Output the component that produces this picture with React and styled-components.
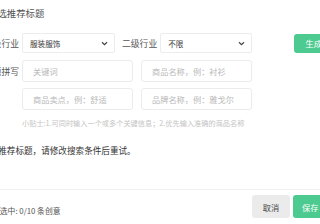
import styled, { createGlobalStyle } from "styled-components";

const GlobalStyle = createGlobalStyle`
  html, body {
    margin: 0;
    padding: 0;
    background: #fff;
    overflow: hidden;
  }
  body {
    font-family: "Noto Sans CJK SC", "Noto Sans", sans-serif;
    color: #333;
  }
`

const Chevron = () => (
    <svg width="7" height="5" viewBox="0 0 7 5">
        <path d="M1 1.2 L3.5 3.6 L6 1.2" fill="none" stroke="#444" strokeWidth="1.2"/>
    </svg>
)

function App() {
    return (
        <>
            <GlobalStyle/>
            <Dialog>
                <Title>精选推荐标题</Title>
                <Form>
                    <SelectRow>
                        <Label>一级行业</Label>
                        <Select width={93}>
                            <span>服装服饰</span>
                            <Chevron/>
                        </Select>
                        <Label $inline>二级行业</Label>
                        <Select width={92}>
                            <span>不限</span>
                            <Chevron/>
                        </Select>
                        <GreenButton>生成标题</GreenButton>
                    </SelectRow>
                    <InputRow>
                        <Label>标题拼写</Label>
                        <Inputs>
                            <Input placeholder="关键词"/>
                            <Input placeholder="商品名称，例：衬衫"/>
                        </Inputs>
                    </InputRow>
                    <InputRow $tight>
                        <Label/>
                        <Inputs>
                            <Input placeholder="商品卖点，例：舒适"/>
                            <Input placeholder="品牌名称，例：雅戈尔"/>
                        </Inputs>
                    </InputRow>
                    <Hint>小贴士:1.可同时输入一个或多个关键信息；2.优先输入准确的商品名称</Hint>
                </Form>
                <Empty>暂无推荐标题，请修改搜索条件后重试。</Empty>
            </Dialog>
            <Divider/>
            <Footer>
                <Selected>已选中: 0/10 条创意</Selected>
                <Buttons>
                    <CancelButton>取消</CancelButton>
                    <SaveButton>保存</SaveButton>
                </Buttons>
            </Footer>
        </>
    )
}

export default App;

const Dialog = styled.div`
  width: 360px;
`

const Title = styled.div`
  margin-left: -12px;
  height: 26px;
  line-height: 26px;
  font-size: 9.4px;
  color: #555;
  white-space: nowrap;
`

const Form = styled.div`
  margin-left: -21px;
  display: flex;
  flex-direction: column;
`

const SelectRow = styled.div`
  margin-top: 7px;
  height: 20px;
  display: flex;
  align-items: center;
`

const Label = styled.span`
  ${({$inline}) => $inline ? `margin: 0 3px 0 7px;` : `width: 40px; margin-right: 3px; text-align: right;`}
  flex-shrink: 0;
  font-size: 8.8px;
  color: #555;
  white-space: nowrap;
`

const Select = styled.div`
  width: ${({width}) => width}px;
  height: 20px;
  box-sizing: border-box;
  border: 1px solid #ececec;
  border-radius: 2px;
  padding: 0 6px 0 7px;
  display: flex;
  align-items: center;
  justify-content: space-between;
  font-size: 7.6px;
  color: #333;
`

const GreenButton = styled.button`
  margin-left: 42px;
  flex-shrink: 0;
  height: 19px;
  padding: 0 11px;
  border: none;
  border-radius: 3px;
  background: #4dca8f;
  color: #fff;
  font-family: inherit;
  font-size: 8.5px;
  white-space: nowrap;
`

const InputRow = styled.div`
  margin-top: ${({$tight}) => $tight ? 6 : 7}px;
  height: 22px;
  display: flex;
  align-items: center;
`

const Inputs = styled.div`
  display: grid;
  grid-template-columns: 111px 111px;
  gap: 8px;
`

const Input = styled.input`
  height: 22px;
  box-sizing: border-box;
  border: 1px solid #ececec;
  border-radius: 3px;
  padding: 0 10px;
  font-family: inherit;
  font-size: 8.2px;
  outline: none;
  &::placeholder {
    color: #b8b8b8;
  }
`

const Hint = styled.div`
  margin: 8px 0 0 43px;
  line-height: 10px;
  font-size: 7.2px;
  color: #c4c4c4;
  white-space: nowrap;
`

const Empty = styled.div`
  margin: 16px 0 0 -19px;
  line-height: 12px;
  font-size: 8.6px;
  color: #333;
  white-space: nowrap;
`

const Divider = styled.div`
  margin-top: 33px;
  height: 1px;
  background: #f0f0f0;
`

const Footer = styled.div`
  margin-top: 5px;
  display: flex;
  align-items: flex-end;
  justify-content: space-between;
`

const Selected = styled.span`
  margin-left: -8px;
  margin-bottom: 2px;
  font-size: 7.8px;
  color: #555;
  white-space: nowrap;
`

const Buttons = styled.div`
  display: flex;
  gap: 3px;
  margin-right: -40px;
`

const CancelButton = styled.button`
  width: 38px;
  height: 23px;
  border: none;
  border-radius: 3px;
  background: #ebebeb;
  color: #444;
  font-family: inherit;
  font-size: 8.2px;
`

const SaveButton = styled(CancelButton)`
  width: 67px;
  padding: 0 0 0 9px;
  text-align: left;
  background: #4dca8f;
  color: #fff;
`
